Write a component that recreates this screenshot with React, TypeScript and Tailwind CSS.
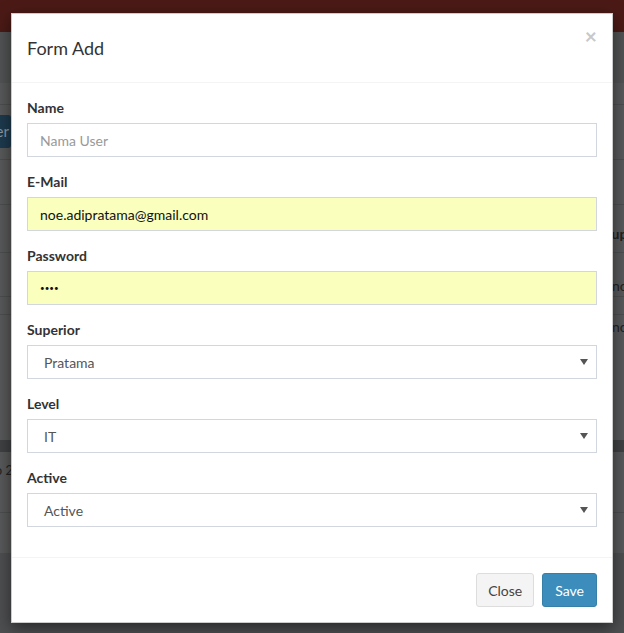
import React from 'react';

const font = { fontFamily: 'Lato, "Open Sans", sans-serif' };

const Field = ({ label, children }: { label: string; children: React.ReactNode }) => (
  <div className="mb-[15px]">
    <label className="block mb-[5px] text-[14px] leading-[20px] font-bold text-[#333]">{label}</label>
    {children}
  </div>
);

const Select = ({ value }: { value: string }) => (
  <div className="flex items-center justify-between h-[34px] border border-[#d2d6de] bg-white pl-[16px] pr-[8px] text-[14px] text-[#555]">
    <span>{value}</span>
    <svg width="8" height="6" viewBox="0 0 8 6">
      <polygon points="0,0 8,0 4,6" fill="#555" />
    </svg>
  </div>
);

const App = () => {
  return (
    <div className="relative w-[624px] h-[633px] overflow-hidden bg-[#4e4f51]" style={font}>
      {/* dimmed page behind the modal */}
      <div className="h-[32px] bg-[#4b1a16]" />
      <div className="h-[51px] bg-[#525354]" />
      <div className="h-[470px] bg-[#58595a] text-[14px]">
        <div className="h-[22px] border-b border-[#4d4e4f]" />
        <div className="pt-[10px] h-[55px] border-b border-[#4d4e4f]">
          <div className="-ml-[110px] w-[121px] h-[33px] bg-[#1d3a4e] text-[#8a9aa5] text-[15px] leading-[33px] text-right pr-[2px] rounded-[3px] whitespace-nowrap">
            Tambah User
          </div>
        </div>
        <div className="h-[45px] border-b border-[#4d4e4f]" />
        <div className="h-[48px] border-b border-[#4d4e4f] flex justify-end items-end pb-[8px]">
          <span className="w-[20px] overflow-hidden whitespace-nowrap font-bold text-[#222]">Superior</span>
        </div>
        <div className="h-[44px] border-b border-[#4d4e4f] flex justify-end items-end">
          <span className="w-[12px] overflow-hidden whitespace-nowrap text-[#222]">none</span>
        </div>
        <div className="h-[18px] border-b border-[#4d4e4f]" />
        <div className="h-[22px] flex justify-end items-end">
          <span className="w-[12px] overflow-hidden whitespace-nowrap text-[#222]">none</span>
        </div>
        <div className="h-[103px]" />
        <div className="h-[12px] bg-[#404142]" />
        <div className="h-[61px] border-b border-[#4d4e4f] pt-[9px]">
          <div className="-ml-[200px] w-[213px] text-right whitespace-nowrap text-[#222] text-[13px]">Showing 1 to 2</div>
        </div>
      </div>

      {/* modal */}
      <div className="absolute left-[11px] top-[13px] w-[602px] bg-white border border-black/20 shadow-[0_5px_15px_rgba(0,0,0,0.5)]">
        <div className="relative h-[69px] px-[15px] flex items-center border-b border-[#f4f4f4]">
          <h4 className="text-[18px] text-[#333] leading-[26px]">Form Add</h4>
          <span className="absolute right-[15px] top-[11px] text-[21px] font-bold leading-[21px] text-[#c8c8c8]">×</span>
        </div>
        <div className="p-[15px]">
          <Field label="Name">
            <input
              readOnly
              placeholder="Nama User"
              className="block w-full h-[34px] border border-[#d2d6de] px-[12px] text-[14px] text-[#555] placeholder:text-[#999] outline-none"
            />
          </Field>
          <Field label="E-Mail">
            <input
              readOnly
              defaultValue="noe.adipratama@gmail.com"
              className="block w-full h-[34px] border border-[#d2d6de] bg-[#faffbd] px-[12px] text-[14px] text-[#111] outline-none"
            />
          </Field>
          <Field label="Password">
            <input
              readOnly
              type="password"
              defaultValue="abcd"
              className="block w-full h-[34px] border border-[#d2d6de] bg-[#faffbd] px-[12px] text-[8px] text-[#111] outline-none"
            />
          </Field>
          <Field label="Superior">
            <Select value="Pratama" />
          </Field>
          <Field label="Level">
            <Select value="IT" />
          </Field>
          <Field label="Active">
            <Select value="Active" />
          </Field>
        </div>
        <div className="border-t border-[#f4f4f4] p-[15px] flex justify-end gap-[8px]">
          <button className="h-[34px] px-[11px] border border-[#ddd] bg-[#f4f4f4] text-[#444] text-[14px] rounded-[3px]">
            Close
          </button>
          <button className="h-[34px] px-[12px] border border-[#367fa9] bg-[#3c8dbc] text-white text-[14px] rounded-[3px]">
            Save
          </button>
        </div>
      </div>
    </div>
  );
};

export default App;
